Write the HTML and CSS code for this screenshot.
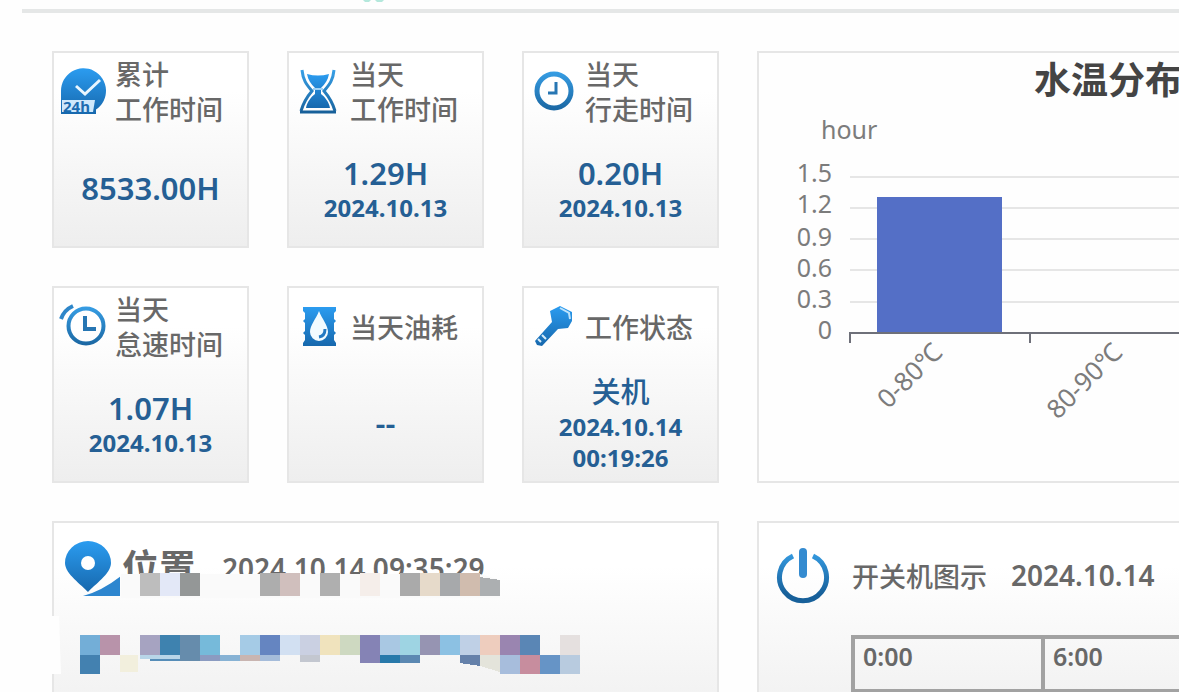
FILE: index.html
```html
<!DOCTYPE html>
<html lang="zh-CN">
<head>
<meta charset="utf-8">
<title>设备工况</title>
<link rel="stylesheet" href="styles.css">
</head>
<body>
<svg class="defs" width="0" height="0" aria-hidden="true">
  <defs>
    <linearGradient id="blue" x1="0" y1="0" x2="0" y2="1"><stop offset="0" stop-color="#2b9cf0"/><stop offset="1" stop-color="#1768ad"/></linearGradient>
    <linearGradient id="blueAbs" gradientUnits="userSpaceOnUse" x1="0" y1="0" x2="0" y2="48"><stop offset="0" stop-color="#3aa4ec"/><stop offset="1" stop-color="#17609a"/></linearGradient>
  </defs>
</svg>
<header class="topbar">
  <svg class="topbar-mark" viewBox="0 0 24 3" aria-hidden="true"><path d="M1 0h8l-2 2H3zM13 0h9l-2 2h-5z" fill="#b4e8dc"/></svg>
</header>
<main class="board">
  <section class="stats">
    <article class="card">
      <div class="card-head">
        <svg class="icon" viewBox="0 0 48 48" aria-hidden="true">
          <path d="M2 47V24A22.500 22.500 0 1 1 37 42.500V47z" fill="url(#blue)"/>
          <path d="M17 19l9 8 15-14" fill="none" stroke="#e8f6ff" stroke-width="3"/>
          <path d="M3 33h33l-2 12H3z" fill="#cfe8fb"/>
          <text x="4" y="45" class="icon-text">24h</text>
        </svg>
        <h2>累计<br>工作时间</h2>
      </div>
      <div class="card-body"><strong>8533.00H</strong></div>
    </article>
    <article class="card">
      <div class="card-head">
        <svg class="icon" viewBox="0 0 48 48" aria-hidden="true">
          <path d="M8 3c1 10 4 14 10 21C12 31 9 37 7 44M40 3c-1 10-4 14-10 21 6 7 9 13 11 20" fill="none" stroke="url(#blueAbs)" stroke-width="3"/>
          <path d="M6 45h36" stroke="#17609a" stroke-width="3"/>
          <path d="M13 7q11 3 22 0c-1 6-4 10-8 14v6c4 3 8 8 9 14H12c1-6 5-11 9-14v-6c-4-4-7-8-8-14z" fill="url(#blue)"/>
          <path d="M19 22h10" stroke="#9fd2f6" stroke-width="2"/>
        </svg>
        <h2>当天<br>工作时间</h2>
      </div>
      <div class="card-body"><strong>1.29H</strong><span>2024.10.13</span></div>
    </article>
    <article class="card">
      <div class="card-head">
        <svg class="icon" viewBox="0 0 48 48" aria-hidden="true">
          <circle cx="25" cy="24" r="17" fill="none" stroke="url(#blueAbs)" stroke-width="5"/>
          <path d="M27 15v11h-8" fill="none" stroke="#2776b3" stroke-width="3"/>
        </svg>
        <h2>当天<br>行走时间</h2>
      </div>
      <div class="card-body"><strong>0.20H</strong><span>2024.10.13</span></div>
    </article>
    <article class="card">
      <div class="card-head">
        <svg class="icon" viewBox="0 0 48 48" aria-hidden="true">
          <circle cx="27" cy="24" r="17.500" fill="none" stroke="url(#blueAbs)" stroke-width="4"/>
          <path d="M26 14v13h11" fill="none" stroke="#2776b3" stroke-width="4"/>
          <path d="M2 17Q5 8 14 4" fill="none" stroke="#2e86c9" stroke-width="4"/>
        </svg>
        <h2>当天<br>怠速时间</h2>
      </div>
      <div class="card-body"><strong>1.07H</strong><span>2024.10.13</span></div>
    </article>
    <article class="card">
      <div class="card-head">
        <svg class="icon" viewBox="0 0 48 48" aria-hidden="true">
          <path d="M9 5h33v4l-2 2v6l2 2-2 2v8l2 2-2 2v5l2 3v3H9v-3l2-3v-5l-2-2 2-2v-8l-2-2 2-2v-6L9 9z" fill="url(#blue)"/>
          <path d="M25 9c3 8 9 14 9 21a9 9 0 0 1-18 0c0-7 6-13 9-21z" fill="#f2fbff"/>
          <path d="M31 27q0 7-6 8" fill="none" stroke="#2379c2" stroke-width="3"/>
        </svg>
        <h2>当天油耗</h2>
      </div>
      <div class="card-body"><strong>--</strong></div>
    </article>
    <article class="card">
      <div class="card-head">
        <svg class="icon" viewBox="0 0 48 48" aria-hidden="true">
          <path d="M21 9l10-5 12 6v9l-4 7-10 1-16 17-5-1-2-4 17-19z" fill="url(#blue)"/>
          <path d="M13 33l4 4M9 37l3 3" stroke="#d7edfb" stroke-width="2"/>
          <path d="M31 6l9 5 1 6" fill="none" stroke="#bfe3fb" stroke-width="2"/>
        </svg>
        <h2>工作状态</h2>
      </div>
      <div class="card-body"><strong class="state">关机</strong><span>2024.10.14</span><span>00:19:26</span></div>
    </article>
  </section>

  <section class="panel chart-panel">
    <h1>水温分布</h1>
    <svg class="chart" role="img" aria-label="水温分布">
      <text x="62" y="39">hour</text>
      <g class="grid">
        <line x1="91" x2="100%" y1="77" y2="77"/><line x1="91" x2="100%" y1="108" y2="108"/><line x1="91" x2="100%" y1="139" y2="139"/><line x1="91" x2="100%" y1="170" y2="170"/><line x1="91" x2="100%" y1="202" y2="202"/>
      </g>
      <g text-anchor="end">
        <text x="73" y="82">1.5</text><text x="73" y="113">1.2</text><text x="73" y="146">0.9</text><text x="73" y="177">0.6</text><text x="73" y="208">0.3</text><text x="73" y="239">0</text>
      </g>
      <rect x="118" y="97" width="125" height="136" fill="#546fc6"/>
      <g class="axis"><line x1="90" x2="100%" y1="233" y2="233"/><line x1="91" x2="91" y1="233" y2="243"/><line x1="271" x2="271" y1="233" y2="243"/></g>
      <g class="ticks" text-anchor="end">
        <text transform="translate(185 254) rotate(-45)">0-80℃</text>
        <text transform="translate(365 254) rotate(-45)">80-90℃</text>
      </g>
    </svg>
  </section>

  <section class="panel place">
    <div class="place-head">
      <svg class="place-icon" viewBox="0 0 58 58" aria-hidden="true">
        <path d="M26 53C20 46 3 35 3 24a23 22 0 0 1 46 0C49 35 32 46 26 53z" fill="url(#blue)"/>
        <circle cx="26" cy="24" r="7" fill="#fff"/>
        <path d="M21 57q19-5 38-20v20z" fill="#2d86cf"/>
      </svg>
      <h2>位置</h2>
      <time>2024.10.14 09:35:29</time>
    </div>
    <svg class="mosaic" viewBox="50 570 560 110" aria-hidden="true">
      <path d="M121 574h359l20 6v18H121z" fill="#fafafa"/>
      <path d="M50 616h9l2 58H50z" fill="#fefefe"/>
      <g shape-rendering="crispEdges">
        <path d="M140 573h20v23h-20z" fill="#bdbdbd"/><path d="M160 573h20v23h-20z" fill="#e3e8f7"/><path d="M180 573h20v23h-20z" fill="#949797"/>
        <path d="M260 573h20v23h-20z" fill="#adadad"/><path d="M280 573h20v23h-20z" fill="#d0bfbd"/><path d="M320 573h20v23h-20z" fill="#afafaf"/><path d="M360 573h20v23h-20z" fill="#f5eeea"/><path d="M400 573h20v23h-20z" fill="#aaa"/><path d="M420 573h20v23h-20z" fill="#e6daca"/><path d="M440 573h20v23h-20z" fill="#a7a9ab"/><path d="M460 573h20v23h-20z" fill="#d0bcae"/><path d="M480 577l20 3v16h-20z" fill="#acafb1"/>
        <path d="M80 635h20v20H80z" fill="#73aed7"/><path d="M100 635h20v20h-20z" fill="#b893aa"/><path d="M80 655h20v19H80z" fill="#4381b0"/><path d="M120 655h18v17h-18z" fill="#f2efdd"/>
        <path d="M140 635h20v22h-20z" fill="#a6a3c1"/><path d="M160 635h20v20h-20z" fill="#3e82af"/><path d="M180 635h20v26h-20z" fill="#668cac"/><path d="M200 635h20v20h-20z" fill="#76bada"/>
        <path d="M140 655h40v4h-40z" fill="#b8d5e8"/><path d="M150 659h30v2h-30z" fill="#568db8"/><path d="M200 655h20v6h-20z" fill="#8b9bc1"/><path d="M220 655h20v6h-20z" fill="#87b2d4"/>
        <path d="M240 635h20v26h-20z" fill="#a5cbe6"/><path d="M260 635h20v20h-20z" fill="#6585c1"/><path d="M280 635h20v20h-20z" fill="#d2e0f2"/><path d="M300 635h20v20h-20z" fill="#cad0e2"/><path d="M320 635h20v20h-20z" fill="#f0e3bd"/><path d="M340 635h20v20h-20z" fill="#ced9c1"/><path d="M240 655h20v6h-20z" fill="#c9b5b1"/><path d="M260 655h20v6h-20z" fill="#a5bcda"/><path d="M300 655h20v7h-20z" fill="#c3c7d0"/>
        <path d="M360 635h20v28h-20z" fill="#8583b5"/><path d="M380 635h20v20h-20z" fill="#a9c8e3"/><path d="M400 635h20v20h-20z" fill="#9ed4e3"/><path d="M380 655h20v8h-20z" fill="#2879aa"/><path d="M400 655h20v8h-20z" fill="#5b88b2"/><path d="M420 635h20v20h-20z" fill="#9694b2"/><path d="M440 635h20v20h-20z" fill="#8cc1e3"/><path d="M460 635h20v20h-20z" fill="#bfd0e6"/><path d="M480 635h20v20h-20z" fill="#eecdbe"/><path d="M460 655h20v11l-20-3z" fill="#6581aa"/><path d="M480 655h20v17l-20-6z" fill="#e4e4db"/>
        <path d="M500 635h20v20h-20z" fill="#9a85b0"/><path d="M520 635h20v20h-20z" fill="#5a86b5"/><path d="M560 635h20v20h-20z" fill="#e5e0df"/><path d="M500 655h20v19h-20z" fill="#a7bddc"/><path d="M520 655h20v19h-20z" fill="#c78d9e"/><path d="M540 655h20v19h-20z" fill="#6694c6"/><path d="M560 655h20v19h-20z" fill="#b8cbdf"/>
      </g>
    </svg>
  </section>

  <section class="panel power">
    <div class="power-head">
      <svg class="power-icon" viewBox="0 0 54 58" aria-hidden="true">
        <path d="M17 10A23.500 23.500 0 1 0 37 10" fill="none" stroke="url(#blueAbs)" stroke-width="5"/>
        <path d="M27 6v22" stroke="#348bd0" stroke-width="8" stroke-linecap="round"/>
      </svg>
      <h2>开关机图示</h2>
      <time>2024.10.14</time>
    </div>
    <table><tbody><tr><td>0:00</td><td>6:00</td></tr></tbody></table>
  </section>
</main>
</body>
</html>
```
FILE: styles.css
```css
* { box-sizing: border-box; }
html, body { height: 100%; }
body {
  margin: 0;
  overflow: hidden;
  background: #fefefe;
  color: #686868;
  font-family: "Noto Sans", "Noto Sans CJK SC", sans-serif;
}
h1, h2 { margin: 0; font-weight: 500; }
.defs { position: absolute; }

.topbar {
  height: 13px;
  margin-left: 22px;
  padding-left: 340px;
  border-bottom: 4px solid #e5e7e7;
}
.topbar-mark { display: block; width: 24px; height: 3px; }

.board {
  display: grid;
  grid-template-columns: 667fr 422fr;
  gap: 38px;
  padding: 38px 0 0 52px;
}
.stats {
  display: grid;
  grid-template-columns: repeat(3, 1fr);
  gap: 38px;
}
.card, .panel {
  border: 2px solid #e6e6e6;
  background: linear-gradient(#fff 20%, #eee);
}
.card {
  display: flex;
  flex-direction: column;
  min-height: 197px;
  padding: 3px 5px 0;
}
.card-head {
  display: flex;
  align-items: center;
  gap: 8px;
  height: 72px;
}
.card-head h2 {
  font-size: 27px;
  line-height: 35px;
  white-space: nowrap;
}
.icon { flex: none; width: 48px; height: 48px; margin-bottom: 3px; }
.icon-text { font: bold 15px "Noto Sans", sans-serif; fill: #1c6cb0; }
.card-body {
  flex: 1;
  display: flex;
  flex-direction: column;
  align-items: center;
  justify-content: center;
  padding-top: 2px;
  color: #255f94;
  font-weight: 700;
}
.card-body strong { font-size: 31px; font-weight: 600; line-height: 38px; }
.card-body .state { font-size: 29px; font-weight: 500; }
.card-body span { font-size: 24px; line-height: 31px; }

.panel { border-right: 0; min-width: 0; overflow: hidden; }
.chart-panel { background: #fefefe; }
.chart-panel h1 {
  padding: 4px 0 0 275px;
  color: #444;
  font-size: 37px;
  font-weight: 700;
  line-height: 46px;
  white-space: nowrap;
}
.chart { display: block; width: 100%; height: 340px; margin-top: -3px; }
.chart text { fill: #7c7c7c; font-size: 25px; }
.chart .ticks text { font-size: 26px; }
.grid line { stroke: #e6e6e6; stroke-width: 2; }
.axis line { stroke: #6e7079; stroke-width: 2; }

.place { position: relative; min-height: 220px; border-right: 2px solid #e6e6e6; overflow: visible; }
.place-head {
  display: flex;
  align-items: center;
  padding: 16px 0 0 8px;
}
.place-icon { width: 58px; height: 58px; }
.place-head h2 { margin-left: 2px; font-size: 37px; font-weight: 700; line-height: 46px; }
.place-head time { margin-left: 26px; font-size: 28px; font-weight: 600; line-height: 38px; white-space: nowrap; }
.mosaic { position: absolute; left: -4px; top: 47px; width: 560px; height: 110px; }

.power-head {
  display: flex;
  align-items: center;
  padding: 23px 0 0 17px;
}
.power-icon { flex: none; width: 54px; height: 58px; }
.power-head h2 { margin-left: 22px; font-size: 27px; white-space: nowrap; }
.power-head time { margin-left: 24px; font-size: 28px; font-weight: 600; white-space: nowrap; }
.power table {
  width: 384px;
  margin: 31px 0 0 92px;
  border-collapse: collapse;
  table-layout: fixed;
}
.power td {
  height: 54px;
  padding: 2px 8px;
  border: 4px solid #a2a2a2;
  font-size: 25px;
  font-weight: 600;
  line-height: 30px;
  vertical-align: top;
}
```
